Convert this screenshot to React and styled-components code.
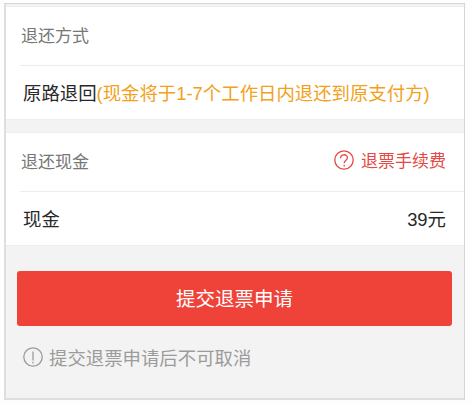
import React from 'react';
import styled, { createGlobalStyle } from 'styled-components';

const GlobalStyle = createGlobalStyle`
    * {
        box-sizing: border-box;
    }

    body {
        margin: 0;
        background-color: #fefefe;
        font-family: "Liberation Sans", "Noto Sans CJK SC", sans-serif;
    }
`;

// Styled components
const Screen = styled.div`
    width: 461px;
    height: 397px;
    margin: 3px 0 0 4px;
    padding-top: 2px;
    border: 1px solid #d6d6d6;
    border-width: 1px 1px 2px 2px;
    border-left-color: #dedede;
    border-bottom-color: #dedede;
    background-color: #f3f3f3;
`;

const Section = styled.section`
    height: 114px;
    margin-bottom: 12px;
    border: 1px solid #eeeeee;
    border-width: 1px 0;
    background-color: #fff;
`;

const Row = styled.div`
    display: flex;
    justify-content: space-between;
    align-items: center;
    height: ${(props) => props.$height}px;
    padding: 0 18px 0 17px;
    white-space: nowrap;
`;

const HeadRow = styled(Row)`
    margin-left: 14px;
    padding-left: 1px;
    border-bottom: 1px solid #ececec;
`;

const Title = styled.span`
    padding-top: 2px;
    color: #777;
    font-size: 17px;
    line-height: 24px;
`;

const Value = styled.span`
    padding-top: 3px;
    color: #282828;
    font-size: 18.4px;
    line-height: 26px;
`;

const Notice = styled.span`
    color: #f2a11a;
`;

const FeeLink = styled.a`
    display: flex;
    align-items: center;
    gap: 7px;
    margin-top: -1px;
    color: #e34a45;
    font-size: 17px;
    line-height: 24px;
`;

const SubmitButton = styled.button`
    display: block;
    width: 435px;
    height: 55px;
    margin: 25px 0 0 11px;
    padding: 0 0 2px;
    border: none;
    border-radius: 3px;
    background-color: #ef4238;
    color: #fff;
    font-family: inherit;
    font-size: 19.5px;
    cursor: pointer;
`;

const Hint = styled.p`
    display: flex;
    align-items: center;
    gap: 6px;
    margin: 20px 0 0 17px;
    color: #9b9b9b;
    font-size: 18.4px;
    line-height: 26px;
`;

const Icon = styled.svg`
    flex: none;
    width: 20px;
    height: 20px;
    margin-bottom: 4px;
    fill: none;
    stroke: currentColor;
    stroke-width: 1.3;
`;

const QuestionIcon = () => (
    <Icon viewBox="0 0 20 20">
        <circle cx="10" cy="10" r="9.2" />
        <path d="M6.6 8.2C6.6 3.7 13.4 3.7 13.4 7.8C13.4 10.2 10.2 10.4 10.2 13.3" />
        <path d="M10.2 14.7v1.7" />
    </Icon>
);

const WarningIcon = () => (
    <Icon viewBox="0 0 20 20">
        <circle cx="10" cy="10" r="9.2" />
        <path d="M10 4.5v8.9M10 14.8v1.7" />
    </Icon>
);

const App = () => {
    return (
        <>
            <GlobalStyle />
            <Screen>
                <Section>
                    <HeadRow $height={59}>
                        <Title>退还方式</Title>
                    </HeadRow>
                    <Row $height={53}>
                        <Value>
                            原路退回<Notice>(现金将于1-7个工作日内退还到原支付方)</Notice>
                        </Value>
                    </Row>
                </Section>
                <Section>
                    <HeadRow $height={59}>
                        <Title>退还现金</Title>
                        <FeeLink>
                            <QuestionIcon />
                            退票手续费
                        </FeeLink>
                    </HeadRow>
                    <Row $height={53}>
                        <Value>现金</Value>
                        <Value>39元</Value>
                    </Row>
                </Section>
                <SubmitButton type="button">提交退票申请</SubmitButton>
                <Hint>
                    <WarningIcon />
                    提交退票申请后不可取消
                </Hint>
            </Screen>
        </>
    );
};

export default App;
